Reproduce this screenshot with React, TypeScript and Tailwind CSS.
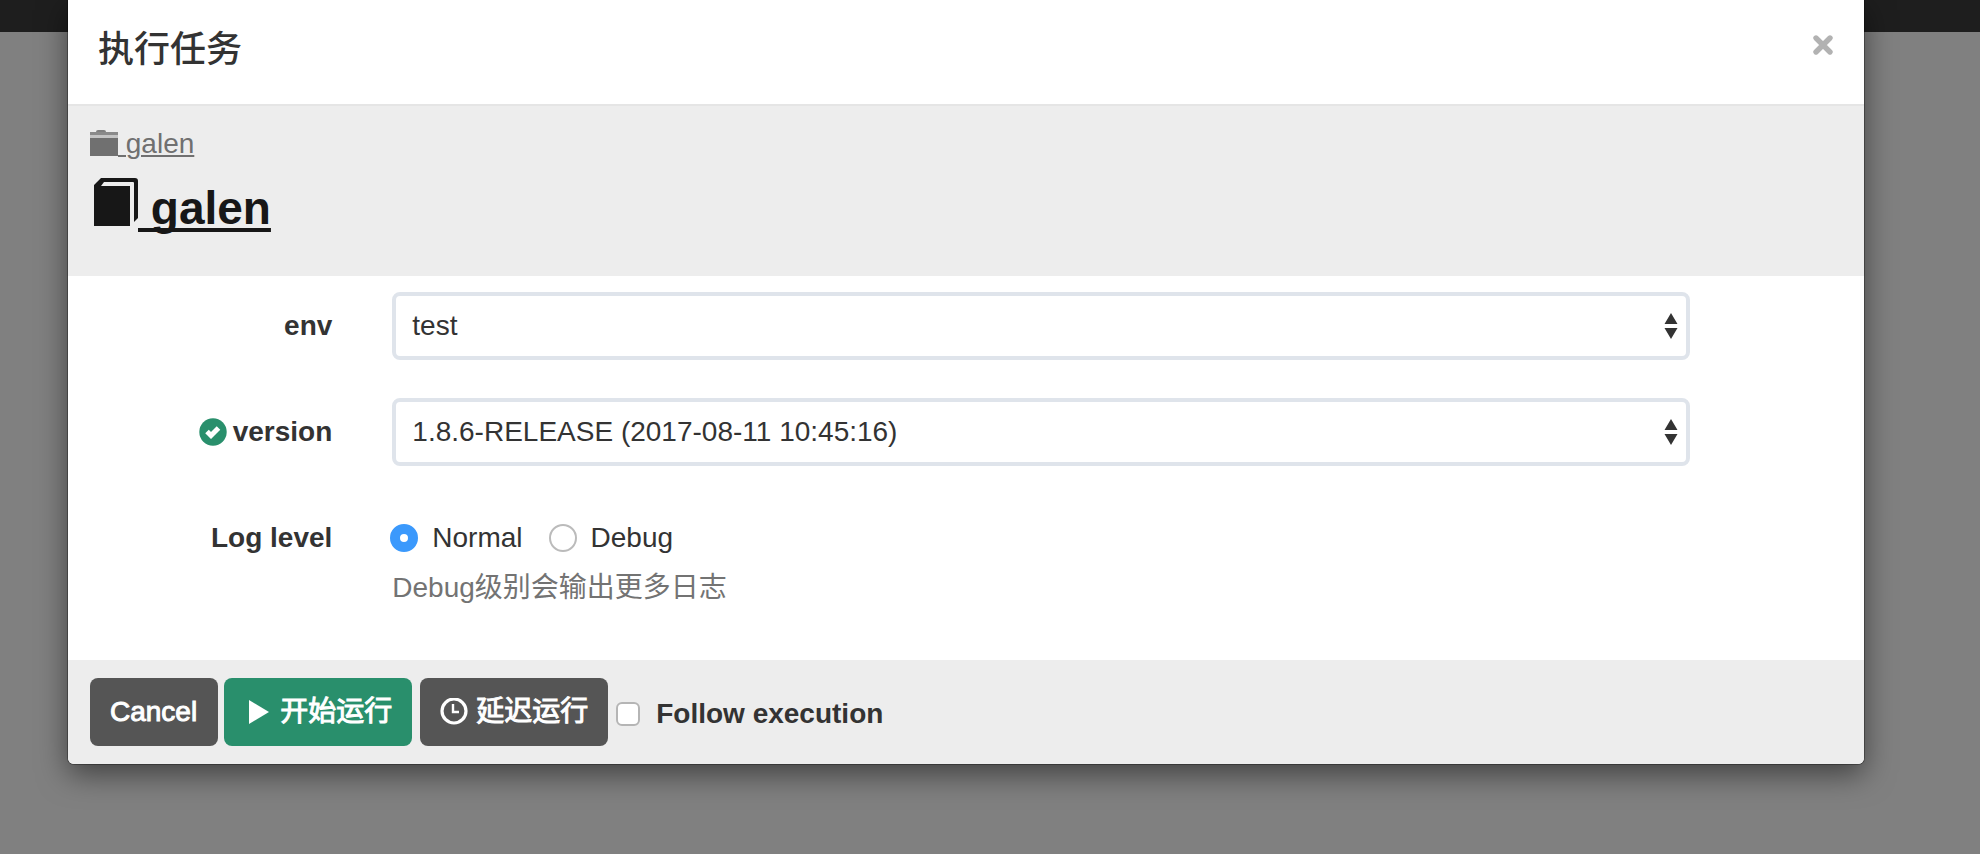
import { useState } from "react";
import type { ReactNode } from "react";

const selectClass =
  "block h-[68px] w-full appearance-none rounded-lg border-4 border-[#dfe4eb] bg-white pl-4 pr-12 text-[28px] text-[#333]";

function SelectField({ id, children }: { id: string; children: ReactNode }) {
  return (
    <div className="relative">
      <select id={id} className={selectClass}>
        {children}
      </select>
      <svg
        className="pointer-events-none absolute right-3 top-5 h-7 w-[14px]"
        viewBox="0 0 14 28"
        fill="#333"
        aria-hidden="true"
      >
        <path d="M7 1 13.5 12H.5zM7 27 .5 16h13z" />
      </svg>
    </div>
  );
}

function CloseIcon() {
  return (
    <svg className="h-[22px] w-[22px]" viewBox="0 0 22 22" fill="none" stroke="#b2b2b2" strokeWidth="5.400" strokeLinecap="round" aria-hidden="true">
      <path d="m4 4 14 14M18 4 4 18" />
    </svg>
  );
}

function FolderIcon() {
  return (
    <svg className="inline-block h-[26px] w-[28px] align-[-3px]" viewBox="0 0 28 26" aria-hidden="true">
      <path d="M6 2q0-2 2-2h6q2 0 2 2z" fill="#808080" />
      <path d="M0 2h28v3H0z" fill="#8a8a8a" />
      <path d="M0 5h28v3H0z" fill="#c4c4c4" />
      <path d="M0 8h28v18H0z" fill="#707070" />
    </svg>
  );
}

function BookIcon() {
  return (
    <svg className="inline-block h-[48px] w-[44px] align-[-2px]" viewBox="0 0 44 48" fill="#171717" aria-hidden="true">
      <path d="M0 7 7 0h34q3 0 3 3v37l-4 4V5q0-1-1-1H10L7 8h29v40H0z" />
    </svg>
  );
}

function CheckCircleIcon() {
  return (
    <svg className="h-7 w-7" viewBox="0 0 28 28" aria-hidden="true">
      <circle cx="14" cy="14" r="13.700" fill="#298f6c" />
      <path d="m8 13.500 4 4 7.500-7.500" fill="none" stroke="#fff" strokeWidth="5" />
    </svg>
  );
}

function ClockIcon() {
  return (
    <svg className="h-7 w-7" viewBox="0 0 28 28" fill="none" stroke="#fff" aria-hidden="true">
      <circle cx="14" cy="13" r="12" strokeWidth="3.200" />
      <path d="M13 6v8h6" strokeWidth="2.400" />
    </svg>
  );
}

const buttonClass =
  "flex h-[68px] items-center rounded-lg text-[28px] text-white [-webkit-text-stroke:1px_#fff]";

function LevelOption({
  label,
  checked,
  onSelect,
}: {
  label: string;
  checked: boolean;
  onSelect: () => void;
}) {
  return (
    <label className="flex items-center gap-[14px]">
      <input
        type="radio"
        name="loglevel"
        checked={checked}
        onChange={onSelect}
        className="h-7 w-7 appearance-none rounded-full border-2 border-[#bbb] bg-white checked:border-10 checked:border-[#3b99fc]"
      />
      {label}
    </label>
  );
}

export default function App() {
  const [level, setLevel] = useState("Normal");
  const [follow, setFollow] = useState(false);

  return (
    <div className="relative min-h-screen overflow-hidden bg-[#808080] font-['Liberation_Sans','Noto_Sans_CJK_SC',sans-serif] text-[28px] leading-10 text-[#333]">
      <div className="h-8 bg-[#1e1e1e]" />
      <div className="absolute inset-0 pl-[68px] pr-[116px]">
        <div
          role="dialog"
          aria-labelledby="dialog-title"
          className="overflow-hidden rounded-b-md bg-white shadow-[0_0_0_1px_rgba(0,0,0,0.3),0_10px_30px_rgba(0,0,0,0.5)]"
        >
          <header className="flex items-start justify-between border-b-2 border-[#e5e5e5] px-[30px] pb-[34px] pt-[30px]">
            <h4 id="dialog-title" className="text-[36px] font-medium">
              执行任务
            </h4>
            <button type="button" aria-label="Close" className="pt-1">
              <CloseIcon />
            </button>
          </header>

          <div className="flex h-[170px] flex-col items-start gap-3 bg-[#ededed] px-[22px] pt-[18px]">
            <a href="#group" className="whitespace-pre text-[#707070] underline decoration-2 underline-offset-2">
              <FolderIcon />
              {" galen"}
            </a>
            <a
              href="#job"
              className="whitespace-pre pl-1 text-[46px] font-bold leading-[64px] text-[#171717] underline decoration-4 underline-offset-4 [text-decoration-skip-ink:none]"
            >
              <BookIcon />
              {" galen"}
            </a>
          </div>

          <form className="flex flex-col gap-[38px] pb-[52px] pt-4">
            <div className="flex items-center">
              <label htmlFor="env" className="w-1/6 pr-[35px] text-right font-bold">
                env
              </label>
              <div className="w-3/4 pl-[25px] pr-6">
                <SelectField id="env">
                  <option>test</option>
                </SelectField>
              </div>
            </div>
            <div className="flex items-center">
              <label htmlFor="version" className="flex w-1/6 items-center justify-end gap-[6px] pr-[35px] font-bold">
                <CheckCircleIcon />
                version
              </label>
              <div className="w-3/4 pl-[25px] pr-6">
                <SelectField id="version">
                  <option>1.8.6-RELEASE (2017-08-11 10:45:16)</option>
                </SelectField>
              </div>
            </div>
            <fieldset className="flex items-start pt-[14px]" aria-labelledby="level-label">
              <div id="level-label" className="w-1/6 pr-[35px] text-right font-bold">
                Log level
              </div>
              <div className="w-3/4 pl-[25px] pr-6">
                <div className="-ml-[2px] flex gap-[26px]">
                  <LevelOption label="Normal" checked={level === "Normal"} onSelect={() => setLevel("Normal")} />
                  <LevelOption label="Debug" checked={level === "Debug"} onSelect={() => setLevel("Debug")} />
                </div>
                <p className="mt-[10px] text-[#737373]">Debug级别会输出更多日志</p>
              </div>
            </fieldset>
          </form>

          <footer className="flex h-[104px] items-center bg-[#ededed] px-[22px]">
            <button type="button" className={`${buttonClass} mr-[6px] bg-[#555] pl-5 pr-[21px]`}>
              Cancel
            </button>
            <button type="button" className={`${buttonClass} mr-2 gap-[11px] bg-[#298f6c] pl-[25px] pr-5`}>
              <svg className="h-6 w-5" viewBox="0 0 20 24" fill="#fff" aria-hidden="true">
                <path d="M0 0 20 12 0 24z" />
              </svg>
              开始运行
            </button>
            <button type="button" className={`${buttonClass} mr-2 gap-2 bg-[#555] px-5`}>
              <ClockIcon />
              延迟运行
            </button>
            <label className="flex items-center gap-4 pt-1 font-bold">
              <input
                type="checkbox"
                checked={follow}
                onChange={(e) => setFollow(e.target.checked)}
                className="h-6 w-6 appearance-none rounded-md border-2 border-[#b5b5b5] bg-white checked:bg-[#3b99fc]"
              />
              Follow execution
            </label>
          </footer>
        </div>
      </div>
    </div>
  );
}
